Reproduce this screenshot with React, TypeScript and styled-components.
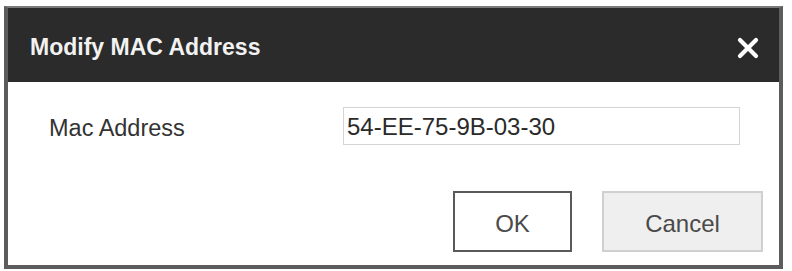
import * as React from "react"
import styled, { createGlobalStyle } from "styled-components"

const GlobalStyle = createGlobalStyle`
  html, body {
    margin: 0;
    padding: 0;
    background: #ffffff;
  }
  body {
    font-family: "Liberation Sans", Arial, sans-serif;
  }
`

const Page = styled.div`
  width: 792px;
  height: 271px;
  padding: 6px 0 0 4px;
  box-sizing: border-box;
`

const Dialog = styled.div`
  width: 779px;
  height: 263px;
  box-sizing: border-box;
  border: 4px solid #5c5c5c;
  border-top: 2px solid #7a7a7a;
  display: flex;
  flex-direction: column;
  background: #ffffff;
`

const Header = styled.div`
  height: 74px;
  flex: none;
  background: #2b2b2b;
  display: flex;
  align-items: center;
  justify-content: space-between;
  padding: 0 19px 0 22px;
`

const Title = styled.h2`
  margin: 0;
  color: #f2f2f2;
  font-size: 23px;
  font-weight: bold;
  padding-top: 4px;
`

const CloseButton = styled.button`
  width: 24px;
  height: 24px;
  padding: 0;
  border: none;
  background: transparent;
  display: flex;
  align-items: center;
  justify-content: center;
  margin-top: 6px;
  cursor: pointer;
`

const Body = styled.div`
  flex: 1;
  display: flex;
  flex-direction: column;
  padding: 25px 16px 0 41px;
`

const FieldRow = styled.div`
  display: flex;
  align-items: center;
  height: 38px;
`

const Label = styled.label`
  width: 294px;
  color: #333333;
  font-size: 23.5px;
  padding-top: 4px;
`

const TextInput = styled.input`
  width: 397px;
  height: 38px;
  box-sizing: border-box;
  border: 1px solid #d4d4d4;
  padding: 2px 0 0 3px;
  font-family: "Liberation Sans", Arial, sans-serif;
  font-size: 24px;
  color: #2a2a2a;
  outline: none;
`

const Actions = styled.div`
  display: flex;
  justify-content: flex-end;
  gap: 30px;
  margin-top: 46px;
`

const ActionButton = styled.button<{ $primary?: boolean }>`
  height: 61px;
  width: ${p => (p.$primary ? "119px" : "161px")};
  box-sizing: border-box;
  border: ${p => (p.$primary ? "2px solid #5a5a5a" : "2px solid #d0d0d0")};
  background: ${p => (p.$primary ? "#ffffff" : "#efefef")};
  color: #4a4a4a;
  font-family: "Liberation Sans", Arial, sans-serif;
  font-size: 24px;
  padding: 4px 0 0;
  cursor: pointer;
`

function CloseIcon() {
  return (
    <svg width="22" height="22" viewBox="0 0 22 22">
      <path d="M3 3 L19 19 M19 3 L3 19" stroke="#ffffff" strokeWidth="4.2" strokeLinecap="round" />
    </svg>
  )
}

export default function App() {
  const [mac, setMac] = React.useState("54-EE-75-9B-03-30")
  return (
    <Page>
      <GlobalStyle />
      <Dialog>
        <Header>
          <Title>Modify MAC Address</Title>
          <CloseButton aria-label="Close">
            <CloseIcon />
          </CloseButton>
        </Header>
        <Body>
          <FieldRow>
            <Label>Mac Address</Label>
            <TextInput value={mac} onChange={e => setMac(e.target.value)} />
          </FieldRow>
          <Actions>
            <ActionButton $primary>OK</ActionButton>
            <ActionButton>Cancel</ActionButton>
          </Actions>
        </Body>
      </Dialog>
    </Page>
  )
}
